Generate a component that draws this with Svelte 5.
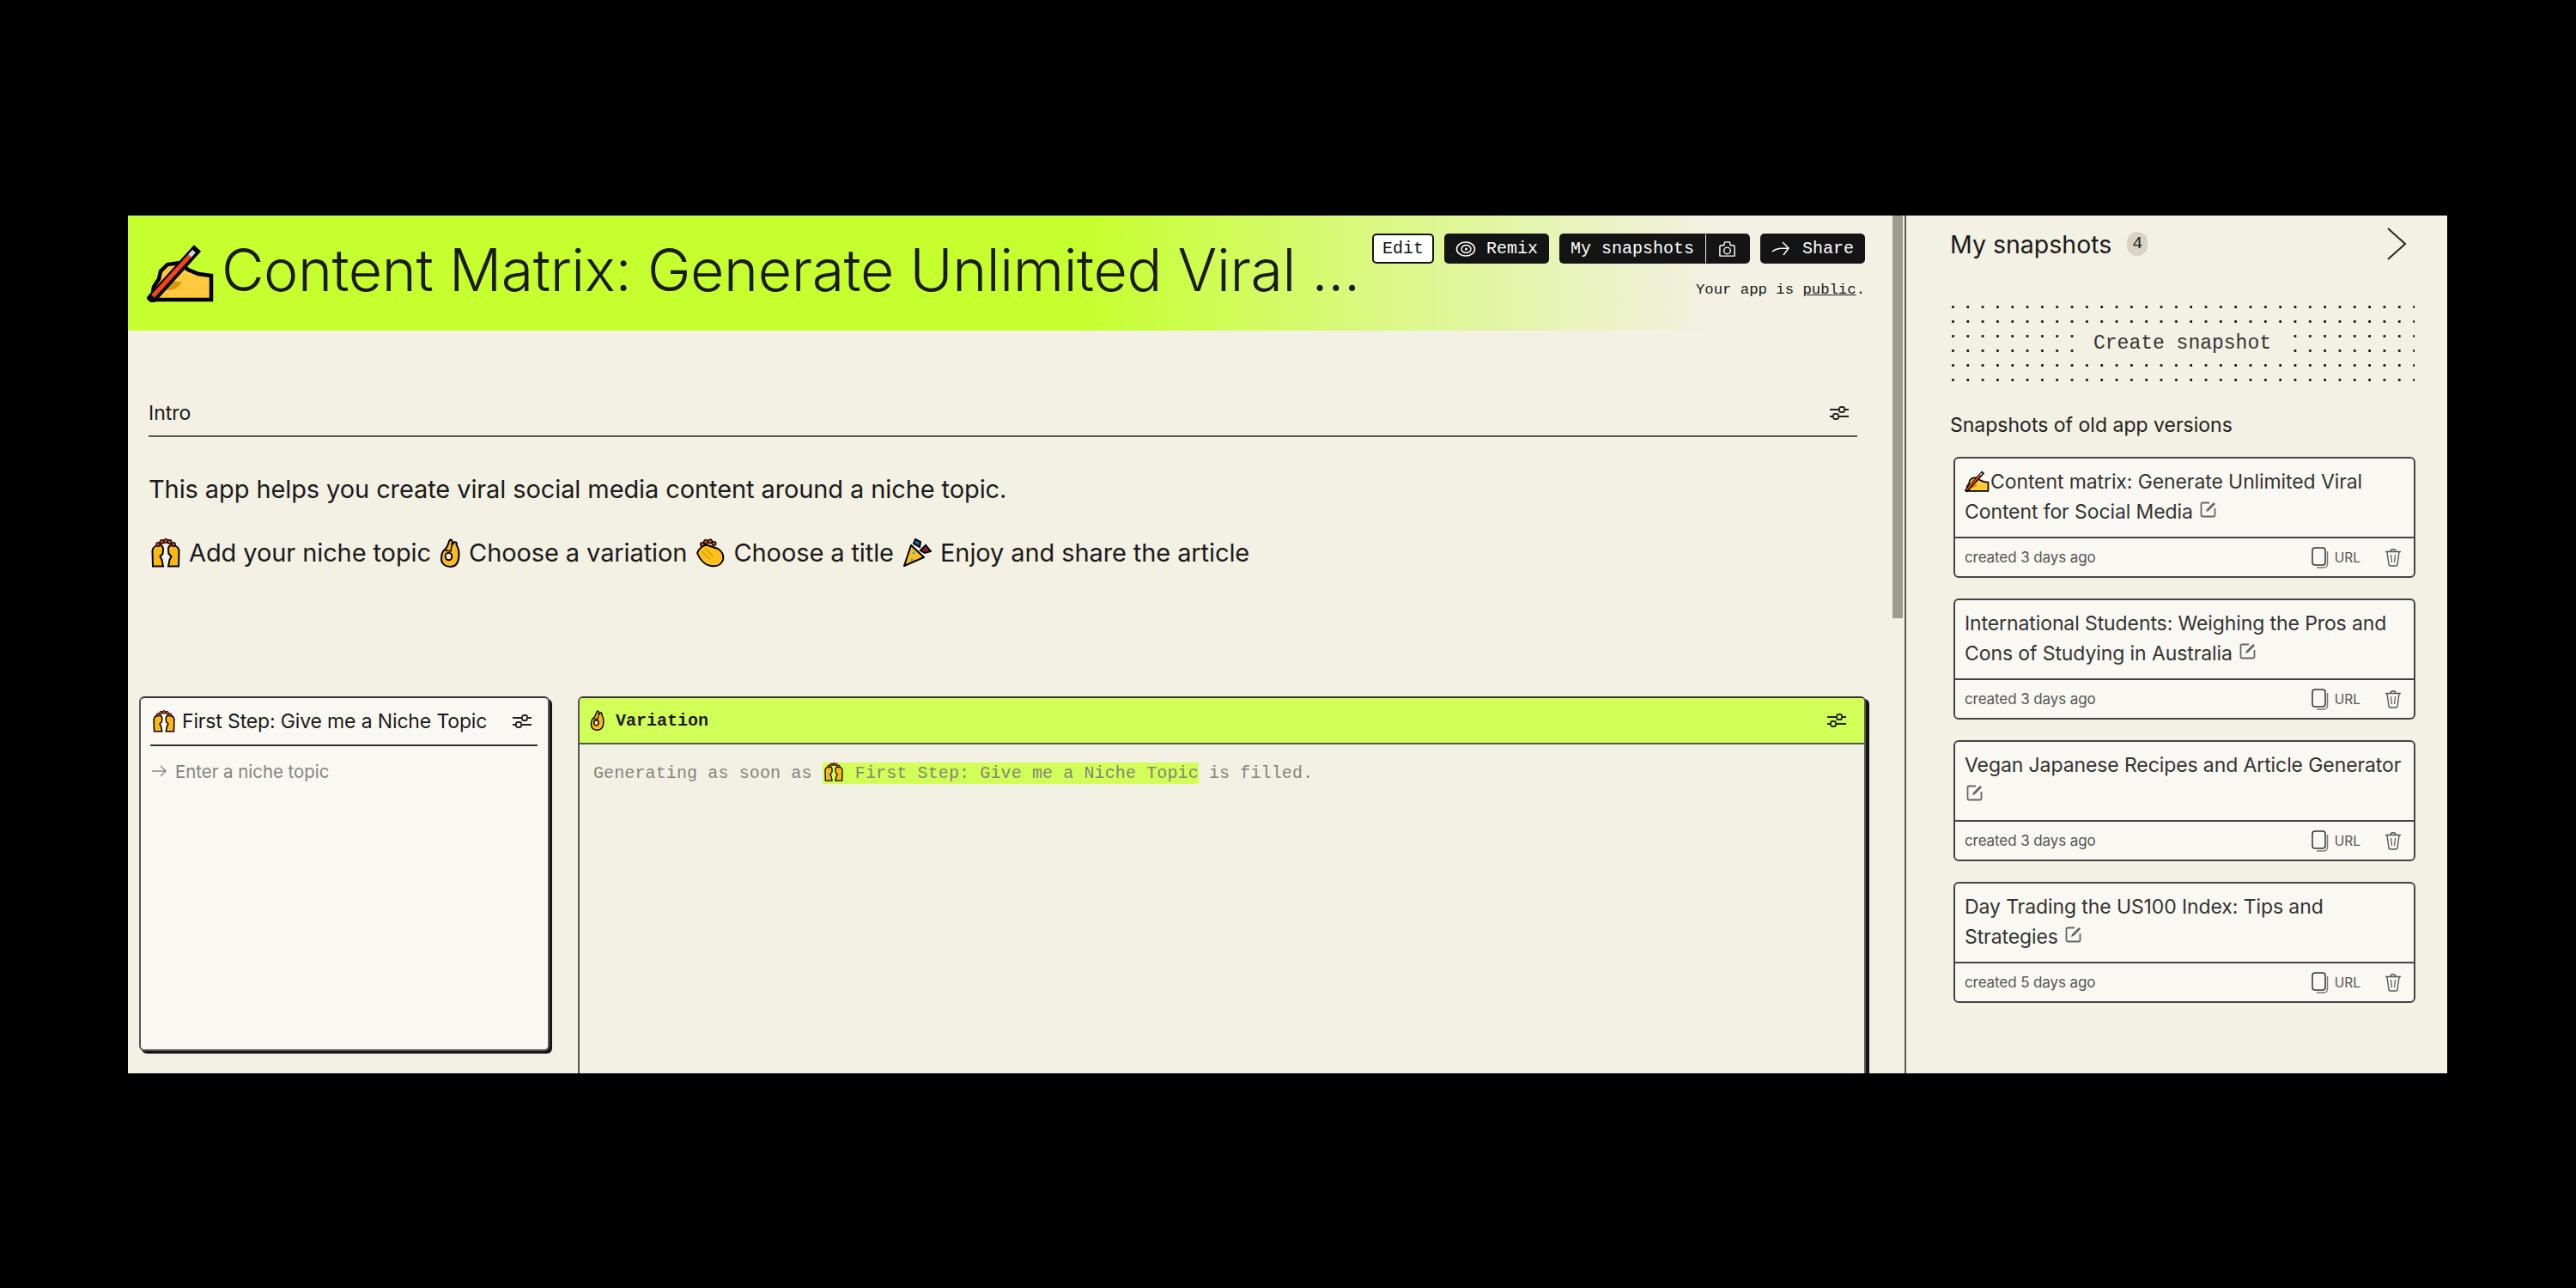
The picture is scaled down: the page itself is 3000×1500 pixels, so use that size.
<script>
  const snapshots = [
    { lines: 'Content matrix: Generate Unlimited Viral Content for Social Media', emoji: true, age: 'created 3 days ago' },
    { lines: 'International Students: Weighing the Pros and Cons of Studying in Australia', age: 'created 3 days ago' },
    { lines: 'Vegan Japanese Recipes and Article Generator', age: 'created 3 days ago' },
    { lines: 'Day Trading the US100 Index: Tips and Strategies', age: 'created 5 days ago' }
  ];
</script>

{#snippet writing(cls)}
  <svg class={cls} viewBox="0 0 82 68" aria-hidden="true">
    <path d="M6 63 L8 50 L14 41 L16 32 L24 24 L38 22 L48 30 L60 35 L75 37 V65 H6 Z" fill="#ffc83d" stroke="#000" stroke-width="4.5" stroke-linejoin="miter"/>
    <path d="M24 44 H40 C39 50 32 54 23 54 Z" fill="#d29a08"/>
    <path d="M3 67 L59 5" stroke="#000" stroke-width="11"/>
    <path d="M7 61 L50 14" stroke="#f2451c" stroke-width="5"/>
    <path d="M50 14 L55 8.500" stroke="#d5d5d5" stroke-width="5"/>
  </svg>
{/snippet}

{#snippet raised(cls)}
  <svg class={cls} viewBox="0 0 34 34" aria-hidden="true">
    <path d="M2 32.500 L1.500 14 C2 10 6 8 10 8 C13 8 14.500 11 14 14 L13.500 18 L10.500 21 L12.500 25 L14 32.500 Z" fill="#fdb913" stroke="#000" stroke-width="2"/>
    <path d="M32 32.500 L32.500 14 C32 10 28 8 24 8 C21 8 19.500 11 20 14 L20.500 18 L23.500 21 L21.500 25 L20 32.500 Z" fill="#fdb913" stroke="#000" stroke-width="2"/>
    <g fill="#d8481c" stroke="#000" stroke-width="1.200">
      <circle cx="8" cy="7" r="2.300"/>
      <circle cx="12.500" cy="4" r="2.300"/>
      <circle cx="17" cy="3" r="2.300"/>
      <circle cx="21.500" cy="4" r="2.300"/>
      <circle cx="26" cy="7" r="2.300"/>
    </g>
  </svg>
{/snippet}

{#snippet okhand(cls)}
  <svg class={cls} viewBox="0 0 24 34" aria-hidden="true">
    <path d="M13 1.500 C15 1.500 15 5 14.500 7 L17 4.500 C19 3.500 20.500 5.500 19.500 7.500 C22.500 12 23 18 22 24 C21 30 17 33 12 33 C6 33 2 29 2 24 C2 19 3 15 6 13 C8 12 9 9 10.500 5 C11 3 12 1.500 13 1.500 Z" fill="#fcbc1d" stroke="#000" stroke-width="2" stroke-linejoin="round"/>
    <ellipse cx="10.500" cy="21" rx="3.800" ry="4.300" fill="#f3f0e4" stroke="#000" stroke-width="2"/>
    <path d="M6 14 L14 15 M14.500 7 L13 14" stroke="#000" stroke-width="1.500" fill="none"/>
  </svg>
{/snippet}

{#snippet clap(cls)}
  <svg class={cls} viewBox="0 0 34 34" aria-hidden="true">
    <path d="M2 17 C4 12 9 7 14 8 L26 12 C31 15 33 20 32 25 C30 31 24 33 18 32 C11 31 5 25 2 17 Z" fill="#fcc21b" stroke="#000" stroke-width="2"/>
    <path d="M7 15 L17 24 M11 12 L21 21" stroke="#d9960c" stroke-width="1.500" fill="none"/>
    <g fill="#d8481c" stroke="#000" stroke-width="1.200">
      <circle cx="8" cy="7" r="2.400"/>
      <circle cx="12" cy="4" r="2.400"/>
      <circle cx="17" cy="3.500" r="2.400"/>
      <circle cx="21.500" cy="6" r="2.400"/>
    </g>
  </svg>
{/snippet}

{#snippet party(cls)}
  <svg class={cls} viewBox="0 0 34 34" aria-hidden="true">
    <path d="M2 32 L10 8 L25 22 Z" fill="#fcc21b" stroke="#000" stroke-width="2" stroke-linejoin="round"/>
    <circle cx="13" cy="17" r="1.500" fill="#29a8d8"/>
    <circle cx="11" cy="25" r="1.500" fill="#29a8d8"/>
    <path d="M13 6 L15 1 L21 4 L20 10 Z" fill="#1f6f9a" stroke="#000" stroke-width="2"/>
    <path d="M21 14 L27 8 L33 15 L26 17 Z" fill="#8c1f1f" stroke="#000" stroke-width="2"/>
  </svg>
{/snippet}

{#snippet sliders()}
  <svg class="sliders" viewBox="0 0 24 18" aria-hidden="true">
    <path d="M1 5 H12 M18 5 H23 M1 13 H5 M11 13 H23" stroke="#222" stroke-width="1.800" fill="none"/>
    <rect x="12" y="2" width="6" height="6" rx="2" fill="none" stroke="#222" stroke-width="1.800"/>
    <rect x="5" y="10" width="6" height="6" rx="2" fill="none" stroke="#222" stroke-width="1.800"/>
  </svg>
{/snippet}

{#snippet editIcon()}
  <svg class="edit-icon" viewBox="0 0 20 20" aria-hidden="true">
    <path d="M11 2.500 H3 A1.500 1.500 0 0 0 1.500 4 V17 A1.500 1.500 0 0 0 3 18.500 H16 A1.500 1.500 0 0 0 17.500 17 V9" fill="none" stroke="#666" stroke-width="1.800"/>
    <path d="M7 13 L8 10 L16 2 L18 4 L10 12 Z" fill="#666"/>
  </svg>
{/snippet}

<div class="page">
  <div class="app">
    <div class="scroll">
      <div class="content">
        <header class="hero">
          {@render writing('hero-emoji')}
          <h1>Content Matrix: Generate Unlimited Viral ...</h1>
          <div class="actions">
            <div class="buttons">
              <button class="btn light">Edit</button>
              <button class="btn dark">
                <svg class="ico remix" viewBox="0 0 24 18" aria-hidden="true">
                  <ellipse cx="12" cy="9" rx="10.500" ry="8" fill="none" stroke="#fff" stroke-width="1.500"/>
                  <ellipse cx="12.500" cy="9" rx="5.500" ry="4.500" fill="none" stroke="#fff" stroke-width="1.500"/>
                  <circle cx="12.500" cy="9" r="1.500" fill="#fff"/>
                </svg>
                Remix
              </button>
              <div class="group">
                <button class="btn dark seg-a">My snapshots</button>
                <button class="btn dark seg-b" aria-label="Camera">
                  <svg class="ico cam" viewBox="0 0 22 20" aria-hidden="true">
                    <path d="M2 18.500 V7 A1.500 1.500 0 0 1 3.500 5.500 H7 L8 1.500 H14 L15 5.500 H18.500 A1.500 1.500 0 0 1 20 7 V18.500 Z" fill="none" stroke="#fff" stroke-width="1.500" stroke-linejoin="round"/>
                    <circle cx="11" cy="12" r="4" fill="none" stroke="#fff" stroke-width="1.500"/>
                  </svg>
                </button>
              </div>
              <button class="btn dark">
                <svg class="ico share" viewBox="0 0 22 18" aria-hidden="true">
                  <path d="M1 12 C5 8 12 8 20 8 M13 1 L20 8 L14 16" fill="none" stroke="#fff" stroke-width="1.500"/>
                </svg>
                Share
              </button>
            </div>
            <div class="status">Your app is <u>public</u>.</div>
          </div>
        </header>

        <section class="intro">
          <div class="intro-head">
            <span>Intro</span>
            {@render sliders()}
          </div>
          <p>This app helps you create viral social media content around a niche topic.</p>
          <p class="steps">
            {@render raised('e-line')} Add your niche topic
            {@render okhand('e-ok')} Choose a variation
            {@render clap('e-line')} Choose a title
            {@render party('e-line')} Enjoy and share the article
          </p>
        </section>

        <section class="cards">
          <div class="card input-card">
            <div class="input-head">
              {@render raised('e-head')}
              <span class="input-title">First Step: Give me a Niche Topic</span>
              {@render sliders()}
            </div>
            <div class="placeholder">
              <svg class="arrow" viewBox="0 0 18 14" aria-hidden="true">
                <path d="M0 7 H16 M10 1 L16 7 L10 13" fill="none" stroke="#888" stroke-width="1.400"/>
              </svg>
              Enter a niche topic
            </div>
          </div>

          <div class="card output-card">
            <div class="output-head">
              {@render okhand('e-small')}
              <span class="output-title">Variation</span>
              {@render sliders()}
            </div>
            <div class="output-body">
              Generating as soon as <mark>{@render raised('e-mark')} First Step: Give me a Niche Topic</mark> is filled.
            </div>
          </div>
        </section>
      </div>
      <div class="thumb"></div>
    </div>

    <aside class="panel">
      <div class="panel-head">
        <h2>My snapshots</h2>
        <span class="badge">4</span>
        <svg class="chev" viewBox="0 0 24 38" aria-hidden="true">
          <path d="M2 1 L22 19 L2 37" fill="none" stroke="#222" stroke-width="2"/>
        </svg>
      </div>

      <div class="dots"><span>Create snapshot</span></div>

      <h3>Snapshots of old app versions</h3>

      <div class="list">
        {#each snapshots as s}
          <article class="snap">
            <div class="snap-title">
              {#if s.emoji}{@render writing('e-snap')}{/if}{s.lines} {@render editIcon()}
            </div>
            <div class="snap-foot">
              <span class="age">{s.age}</span>
              <svg class="copy" viewBox="0 0 20 25" aria-hidden="true">
                <rect x="1" y="1" width="15" height="20" rx="3" fill="none" stroke="#333" stroke-width="1.500"/>
                <path d="M18.500 5 V20 A4 4 0 0 1 14.500 24 H6" fill="none" stroke="#777" stroke-width="1.500"/>
              </svg>
              <span class="url">URL</span>
              <svg class="trash" viewBox="0 0 20 22" aria-hidden="true">
                <path d="M1 4.500 H19 M7 4 C7 1 13 1 13 4" fill="none" stroke="#555" stroke-width="1.400"/>
                <path d="M3 5 L5 19.500 C5.300 21 6 21 7 21 H13 C14 21 14.700 21 15 19.500 L17 5" fill="none" stroke="#555" stroke-width="1.400"/>
                <path d="M7.500 8 L8.500 17 M12.500 8 L11.500 17" fill="none" stroke="#555" stroke-width="1.200"/>
              </svg>
            </div>
          </article>
        {/each}
      </div>
    </aside>
  </div>
</div>

<style>
  :global(body) {
    margin: 0;
    background: #000;
  }
  .page {
    box-sizing: border-box;
    width: 3000px;
    height: 1500px;
    padding: 251px 0 0 149px;
    background: #000;
    font-family: Inter, "Liberation Sans", sans-serif;
    color: #1a1a1a;
  }
  .app {
    display: flex;
    width: 2701px;
    height: 999px;
    background: #f3f0e4;
    overflow: hidden;
  }
  .scroll {
    position: relative;
    flex: none;
    width: 2067px;
    height: 999px;
    overflow: hidden;
  }
  .thumb {
    position: absolute;
    top: 0;
    right: 0;
    width: 12px;
    height: 469px;
    background: #9c9c91;
  }
  .content {
    width: 2055px;
  }
  .hero {
    box-sizing: border-box;
    height: 134px;
    display: flex;
    align-items: flex-start;
    padding: 0 32px 0 22px;
    background: linear-gradient(90deg, #c5ff2d 0, #c5ff2d 54%, #f3f0e4 90%);
  }
  .hero-emoji {
    width: 82px;
    height: 68px;
    margin-top: 33px;
    flex: none;
  }
  h1 {
    margin: 24px 0 0 5px;
    flex: 1;
    min-width: 0;
    font-size: 68px;
    line-height: 78px;
    letter-spacing: -0.420px;
    font-weight: 300;
    white-space: nowrap;
    color: #1a1a1a;
  }
  .actions {
    flex: none;
    margin-top: 21px;
    display: flex;
    flex-direction: column;
    align-items: flex-end;
  }
  .buttons {
    display: flex;
    gap: 12px;
  }
  .group {
    display: flex;
  }
  .btn {
    box-sizing: border-box;
    height: 35px;
    display: flex;
    align-items: center;
    padding: 0 11px;
    gap: 12px;
    font-family: "Liberation Mono", monospace;
    font-size: 20px;
    border-radius: 5px;
    border: 2px solid #141414;
  }
  .light {
    background: #fff;
    color: #141414;
    padding: 0 10px;
  }
  .dark {
    background: #141414;
    color: #fff;
  }
  .seg-a {
    border-radius: 5px 0 0 5px;
    border-right: 1px solid #f3f0e4;
    padding: 0 13px 0 11px;
  }
  .seg-b {
    border-radius: 0 5px 5px 0;
    border-left: 0;
    padding: 0 14px;
  }
  .ico {
    display: block;
    flex: none;
  }
  .remix {
    width: 24px;
    height: 18px;
  }
  .cam {
    width: 21px;
    height: 20px;
  }
  .share {
    width: 22px;
    height: 18px;
    margin-right: 2px;
  }
  .status {
    margin-top: 21px;
    font-family: "Liberation Mono", monospace;
    font-size: 17.300px;
    line-height: 20px;
    color: #1a1a1a;
  }
  .intro {
    padding: 80px 41px 0 24px;
  }
  .intro-head {
    box-sizing: border-box;
    height: 44px;
    display: flex;
    align-items: center;
    justify-content: space-between;
    border-bottom: 2px solid #5a5a50;
    font-size: 23px;
    padding: 0 9px 10px 0;
  }
  .sliders {
    width: 24px;
    height: 18px;
    flex: none;
  }
  .intro p {
    margin: 40px 0 0;
    font-size: 29px;
    line-height: 42px;
    letter-spacing: -0.100px;
  }
  .intro p.steps {
    margin-top: 32px;
  }
  .e-line {
    width: 34px;
    height: 34px;
    margin: 0 2px;
    vertical-align: -7px;
  }
  .e-line:first-child {
    margin-left: 3px;
  }
  .e-ok {
    width: 24px;
    height: 34px;
    margin: 0 2px;
    vertical-align: -7px;
  }
  .cards {
    display: flex;
    align-items: flex-start;
    gap: 33px;
    margin-top: 146px;
    padding-left: 13px;
  }
  .card {
    box-sizing: border-box;
    flex: none;
    border: 2px solid #555;
    border-top-color: #333;
    border-radius: 6px;
    box-shadow: 3px 3px 0 #141414;
  }
  .input-card {
    width: 478px;
    height: 413px;
    background: #faf8f2;
    padding: 0 12px 0 11px;
  }
  .input-head {
    height: 54px;
    display: flex;
    align-items: center;
    gap: 8px;
    border-bottom: 2px solid #333;
  }
  .e-head {
    width: 26px;
    height: 26px;
    margin-left: 3px;
    flex: none;
  }
  .input-title {
    flex: 1;
    font-size: 23px;
    letter-spacing: -0.150px;
    white-space: nowrap;
  }
  .input-head .sliders {
    margin-right: 6px;
  }
  .placeholder {
    display: flex;
    align-items: center;
    gap: 9px;
    margin-top: 16px;
    height: 26px;
    font-size: 20.400px;
    color: #85857b;
  }
  .arrow {
    width: 18px;
    height: 14px;
    margin-left: 2px;
  }
  .output-card {
    width: 1500px;
    height: 1560px;
    background: #f3f0e4;
    box-shadow: 4px 3px 0 #141414;
  }
  .output-head {
    box-sizing: border-box;
    height: 54px;
    display: flex;
    align-items: center;
    gap: 13px;
    padding: 0 20px 0 12px;
    background: #d1ff57;
    border-bottom: 2px solid #555;
    border-radius: 4px 4px 0 0;
  }
  .e-small {
    width: 17px;
    height: 24px;
    flex: none;
  }
  .output-title {
    flex: 1;
    font-family: "Liberation Mono", monospace;
    font-size: 20px;
    font-weight: 700;
  }
  .output-body {
    padding: 20px 16px;
    font-family: "Liberation Mono", monospace;
    font-size: 20px;
    line-height: 26px;
    letter-spacing: 0.120px;
    color: #85857b;
    white-space: nowrap;
  }
  mark {
    padding: 1px 0;
    background: #d1ff57;
    color: #85857b;
  }
  .e-mark {
    width: 22px;
    height: 24px;
    margin: 0 2px;
    vertical-align: -5px;
  }
  .panel {
    box-sizing: border-box;
    flex: none;
    width: 632px;
    margin-left: 2px;
    border-left: 2px solid #5a5a50;
    padding: 0 38px 0 51px;
  }
  .panel-head {
    height: 66px;
    display: flex;
    align-items: center;
    gap: 18px;
  }
  h2 {
    margin: 0;
    font-size: 28.500px;
    font-weight: 400;
  }
  .badge {
    width: 24px;
    height: 28px;
    border-radius: 12px;
    background: #d9d2c3;
    font-family: "Liberation Mono", monospace;
    font-size: 20px;
    line-height: 28px;
    text-align: center;
  }
  .chev {
    width: 24px;
    height: 38px;
    margin-left: auto;
    margin-right: 9px;
  }
  .dots {
    margin-top: 32px;
    height: 102px;
    display: flex;
    align-items: center;
    justify-content: center;
    background-image: radial-gradient(circle at 3.500px 8.500px, #111 1.200px, transparent 1.800px);
    background-size: 17.330px 17px;
  }
  .dots span {
    padding: 7px 22px;
    background: #f3f0e4;
    font-family: "Liberation Mono", monospace;
    font-size: 23px;
    line-height: 26px;
    color: #333;
    white-space: nowrap;
  }
  h3 {
    margin: 28px 0 0;
    font-size: 23px;
    line-height: 32px;
    font-weight: 400;
    color: #222;
  }
  .list {
    margin-top: 21px;
    margin-left: 4px;
    display: flex;
    flex-direction: column;
    gap: 24px;
  }
  .snap {
    box-sizing: border-box;
    width: 538px;
    height: 141px;
    display: flex;
    flex-direction: column;
    background: #faf8f2;
    border: 2px solid #444;
    border-radius: 6px;
  }
  .snap-title {
    flex: 1;
    box-sizing: border-box;
    padding: 10px 11px 0;
    font-size: 23px;
    line-height: 35px;
    letter-spacing: -0.100px;
    color: #333;
    border-bottom: 2px solid #444;
  }
  .e-snap {
    width: 30px;
    height: 25px;
    vertical-align: -4px;
  }
  .edit-icon {
    width: 20px;
    height: 20px;
    margin-left: 2px;
    vertical-align: 1px;
  }
  .snap-foot {
    height: 44px;
    flex: none;
    display: flex;
    align-items: center;
    padding: 0 14px 0 11px;
  }
  .age {
    flex: 1;
    font-size: 17px;
    letter-spacing: -0.100px;
    color: #555;
  }
  .copy {
    width: 20px;
    height: 25px;
  }
  .url {
    margin-left: 7px;
    font-size: 15.500px;
    color: #555;
  }
  .trash {
    width: 20px;
    height: 22px;
    margin-left: 28px;
  }
</style>
